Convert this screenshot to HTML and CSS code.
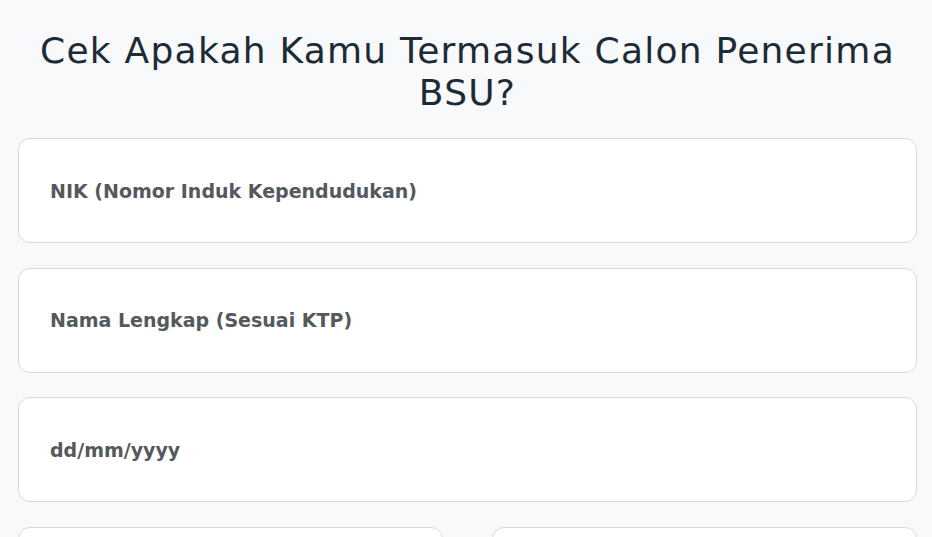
FILE: index.html
```html
<!DOCTYPE html>
<html lang="en">
<head>
    <meta charset="UTF-8">
    <meta name="viewport" content="width=device-width, initial-scale=1.0">
    <title>Cek BSU</title>
    <link rel="stylesheet" href="styles.css">
</head>
<body>
    <div class="wrapper">
        <h1 class="title">Cek Apakah Kamu Termasuk Calon Penerima BSU?</h1>
        <form class="check-form">
            <input type="text" class="field" placeholder="NIK (Nomor Induk Kependudukan)">
            <input type="text" class="field" placeholder="Nama Lengkap (Sesuai KTP)">
            <input type="text" class="field" placeholder="dd/mm/yyyy">
            <div class="field-row">
                <input type="text" class="field" placeholder="">
                <input type="text" class="field" placeholder="">
            </div>
        </form>
    </div>
</body>
</html>
```

FILE: styles.css
```css
body {
    margin: 0;
    background-color: #f7f9fa;
    font-family: "DejaVu Sans", Arial, sans-serif;
}
.wrapper {
    padding: 30px 15px 0 18px;
}
.title {
    margin: 0 0 24px;
    font-size: 36px;
    line-height: 42px;
    font-weight: 400;
    text-align: center;
    color: #1d2b36;
    letter-spacing: 1.25px;
}
.check-form {
    display: flex;
    flex-direction: column;
    gap: 24.5px;
}
.field {
    box-sizing: border-box;
    width: 100%;
    height: 105px;
    padding: 0 31px;
    background: #fff;
    border: 1px solid #d6dadd;
    border-radius: 12px;
    font-family: "DejaVu Sans", Arial, sans-serif;
    font-size: 19px;
    font-weight: 700;
    color: #54595e;
    outline: none;
}
.field::placeholder {
    color: #54595e;
    opacity: 1;
}
.field-row {
    display: flex;
    gap: 49px;
}
```
